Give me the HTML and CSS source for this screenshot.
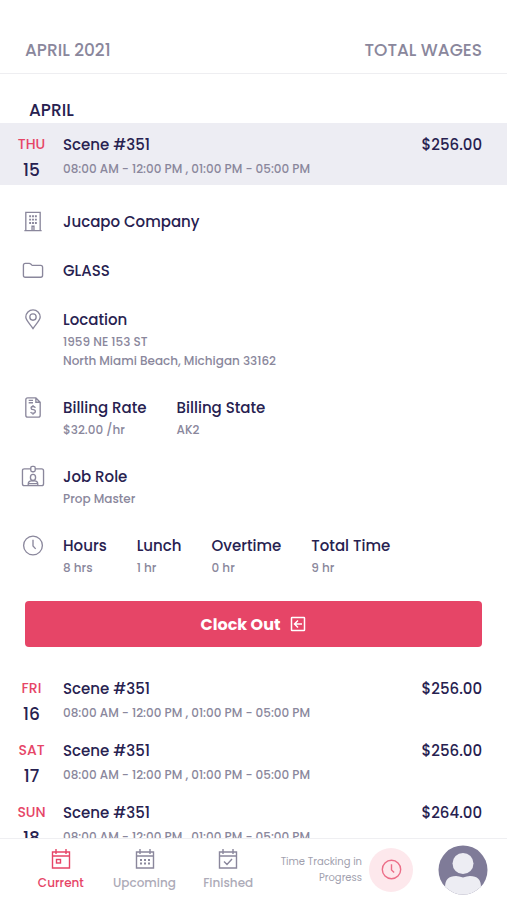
FILE: index.html
```html
<!DOCTYPE html>
<html lang="en">
<head>
<meta charset="utf-8">
<meta name="viewport" content="width=device-width, initial-scale=1">
<title>Total Wages</title>
<link rel="stylesheet" href="styles.css">
</head>
<body>
<header class="topbar"><span>APRIL 2021</span><span>TOTAL WAGES</span></header>
<main class="content">
  <h1 class="month">APRIL</h1>
  <article class="shift shift-active">
    <div class="date"><span class="weekday">THU</span><span class="day">15</span></div>
    <div class="info"><h2 class="title">Scene #351</h2><p class="times">08:00 AM - 12:00 PM , 01:00 PM - 05:00 PM</p></div>
    <span class="amount">$256.00</span>
  </article>
  <section class="details">
    <div class="detail">
      <svg class="icon" viewBox="0 0 24 24"><path d="M4.500 21V2.500h15V21M3 21.500h18M11 21v-4h2v4"/><path class="dots" d="M8 6.500h2M11 6.500h2M14 6.500h2M8 10h2M11 10h2M14 10h2M8 13.500h2M11 13.500h2M14 13.500h2"/></svg>
      <h3 class="title">Jucapo Company</h3>
    </div>
    <div class="detail">
      <svg class="icon" viewBox="0 0 24 24"><path d="M2 6.500q0-2 2-2h4q1 0 1.700.8l1 .9q.6.500 1.500.5H20q2 0 2 2V17q0 2-2 2H4q-2 0-2-2Z"/></svg>
      <h3 class="title">GLASS</h3>
    </div>
    <div class="detail">
      <svg class="icon" viewBox="0 0 24 24"><path d="M12 21.500C9.500 17.500 4.500 13 4.500 9.500a7.500 7.500 0 0 1 15 0c0 3.500-5 8-7.500 12Z"/><circle cx="12" cy="9.500" r="3.300"/></svg>
      <div><h3 class="title">Location</h3><p class="sub">1959 NE 153 ST<br>North Miami Beach, Michigan 33162</p></div>
    </div>
    <div class="detail">
      <svg class="icon" viewBox="0 0 24 24"><path d="M15 2H6.500Q4.500 2 4.500 4v16q0 2 2 2h11q2 0 2-2V6.500Zm0 0v4.500h4.500M7.500 4.500H12M7.500 7H12M14.500 12.200q-.6-1.200-2.400-1.200c-2.800 0-2.800 3 0 3.300 3.200.3 3 3.700 0 3.700q-1.900 0-2.600-1.300M12 9.500V11M12 18v1.500"/></svg>
      <div class="columns">
        <div><h3 class="title">Billing Rate</h3><p class="sub">$32.00 /hr</p></div>
        <div><h3 class="title">Billing State</h3><p class="sub">AK2</p></div>
      </div>
    </div>
    <div class="detail">
      <svg class="icon" viewBox="0 0 24 24"><path d="M9.500 4H3Q1 4 1 6v13.500q0 2 2 2h18q2 0 2-2V6q0-2-2-2h-6.500M9.700 3q0-1.500 1.500-1.500h1.600q1.500 0 1.500 1.500v2.500q0 1.500-1.500 1.500h-1.600q-1.500 0-1.500-1.500ZM7 21.500V20q0-3.500 3.500-3.500h3Q17 16.500 17 20v1.500M7 19.500h10"/><ellipse cx="12" cy="13" rx="2.700" ry="3.200"/></svg>
      <div><h3 class="title">Job Role</h3><p class="sub">Prop Master</p></div>
    </div>
    <div class="detail">
      <svg class="icon" viewBox="0 0 24 24"><circle cx="12" cy="12" r="9.800"/><path d="M12 6v6.500l2.800 3"/></svg>
      <div class="columns">
        <div><h3 class="title">Hours</h3><p class="sub">8 hrs</p></div>
        <div><h3 class="title">Lunch</h3><p class="sub">1 hr</p></div>
        <div><h3 class="title">Overtime</h3><p class="sub">0 hr</p></div>
        <div><h3 class="title">Total Time</h3><p class="sub">9 hr</p></div>
      </div>
    </div>
    <button class="clock-out" type="button">Clock Out
      <svg class="exit" viewBox="0 0 16 16"><rect x="1.500" y="1.500" width="13" height="13" rx=".6"/><path d="M12 8H5M8 4.500 4.500 8 8 11.500"/></svg>
    </button>
  </section>
  <article class="shift">
    <div class="date"><span class="weekday">FRI</span><span class="day">16</span></div>
    <div class="info"><h2 class="title">Scene #351</h2><p class="times">08:00 AM - 12:00 PM , 01:00 PM - 05:00 PM</p></div>
    <span class="amount">$256.00</span>
  </article>
  <article class="shift">
    <div class="date"><span class="weekday">SAT</span><span class="day">17</span></div>
    <div class="info"><h2 class="title">Scene #351</h2><p class="times">08:00 AM - 12:00 PM , 01:00 PM - 05:00 PM</p></div>
    <span class="amount">$256.00</span>
  </article>
  <article class="shift">
    <div class="date"><span class="weekday">SUN</span><span class="day">18</span></div>
    <div class="info"><h2 class="title">Scene #351</h2><p class="times">08:00 AM - 12:00 PM , 01:00 PM - 05:00 PM</p></div>
    <span class="amount">$264.00</span>
  </article>
</main>
<nav class="tabbar">
  <a class="tab tab-current" href="#current">
    <svg class="tab-icon" viewBox="0 0 22 22"><path d="M2.500 4h17v16h-17ZM2.500 8h17M6 1v5M16 1v5"/><rect x="6.500" y="11.500" width="4" height="3.500"/></svg>
    Current
  </a>
  <a class="tab" href="#upcoming">
    <svg class="tab-icon" viewBox="0 0 22 22"><path d="M2.500 4h17v16h-17ZM2.500 8h17M6 1v5M16 1v5"/><path class="dots" d="M6 12h2M10 12h2M14 12h2M6 15.500h2M10 15.500h2M14 15.500h2"/></svg>
    Upcoming
  </a>
  <a class="tab" href="#finished">
    <svg class="tab-icon" viewBox="0 0 22 22"><path d="M2.500 4h17v16h-17ZM2.500 8h17M6 1v5M16 1v5M7 13.500l3 3 5-5.500"/></svg>
    Finished
  </a>
  <p class="status">Time Tracking in Progress</p>
  <button class="tracker" type="button" aria-label="Time tracking">
    <svg class="tracker-icon" viewBox="0 0 24 24"><circle cx="12" cy="12" r="10.500"/><path d="M12 6v6.500l3 3"/></svg>
  </button>
  <button class="avatar" type="button" aria-label="Profile">
    <svg viewBox="0 0 50 50"><defs><clipPath id="disc"><circle cx="25" cy="25" r="24.500"/></clipPath></defs><g clip-path="url(#disc)"><path fill="#7f7b98" d="M0 0h50v50H0Z"/><circle cx="25" cy="18.500" r="10.500" fill="#ededf3"/><path fill="#ededf3" d="M7 50V42Q7 31 18 31q3 0 7 1.500Q29 31 32 31q11 0 11 11v8Z"/></g></svg>
  </button>
</nav>
</body>
</html>
```
FILE: styles.css
```css
* { box-sizing: border-box; }
body {
  margin: 0;
  height: 100vh;
  display: flex;
  flex-direction: column;
  background: #fff;
  color: #272150;
  font-family: Poppins, Inter, "Liberation Sans", sans-serif;
  font-weight: 500;
}
h1, h2, h3, p { margin: 0; font-weight: 500; }
button { padding: 0; border: 0; font: inherit; cursor: pointer; }
svg { display: block; fill: none; stroke: currentColor; }

.topbar {
  display: flex;
  justify-content: space-between;
  padding: 38px 25px 11px;
  border-bottom: 1px solid #eeeef1;
  color: #8a879c;
  font-size: 17px;
  line-height: 24px;
}
.content {
  flex: 1;
  min-height: 0;
  overflow-y: auto;
  scrollbar-width: none;
}
.month {
  padding: 24px 29px 1px;
  font-size: 17px;
  line-height: 24px;
}
.shift {
  display: flex;
  height: 62px;
  padding: 10px 25px 0 0;
}
.shift-active { background: #ededf3; }
.date {
  width: 63px;
  display: flex;
  flex-direction: column;
  align-items: center;
}
.weekday {
  color: #e64567;
  font-size: 14px;
  line-height: 23px;
}
.day {
  font-size: 17px;
  line-height: 28px;
}
.info { flex: 1; }
.title, .amount {
  font-size: 15px;
  line-height: 23px;
}
.times, .sub {
  color: #8a879c;
  font-size: 12px;
}
.times { line-height: 25px; }
.sub {
  margin-top: 1px;
  line-height: 19px;
}

.details {
  display: flex;
  flex-direction: column;
  gap: 26px;
  padding: 25px 25px 20px;
}
.detail {
  display: flex;
  align-items: flex-start;
  gap: 18px;
}
.icon {
  width: 24px;
  height: 23px;
  flex: none;
  margin-left: -4px;
  color: #8a879c;
  stroke-width: 1.4;
}
.dots { stroke-width: 2; }
.columns { display: flex; gap: 30px; }
.clock-out {
  display: flex;
  align-items: center;
  justify-content: center;
  gap: 10px;
  height: 46px;
  margin-top: -2px;
  border-radius: 4px;
  background: #e64567;
  color: #fff;
  font-size: 16px;
  font-weight: 700;
}
.exit { width: 16px; height: 16px; stroke-width: 1.5; }

.tabbar {
  display: flex;
  align-items: center;
  height: 62px;
  padding: 0 19px;
  border-top: 1px solid #efeff2;
  background: #fff;
}
.tab {
  flex: 1;
  display: flex;
  flex-direction: column;
  align-items: center;
  gap: 4px;
  color: #adabb8;
  font-size: 12px;
  line-height: 18px;
  text-decoration: none;
}
.tab-icon { width: 22px; height: 22px; color: #8a879c; stroke-width: 1.4; }
.tab-current, .tab-current .tab-icon { color: #e64567; }
.status {
  width: 92px;
  color: #a19fae;
  font-size: 10px;
  font-weight: 400;
  line-height: 16px;
  text-align: right;
}
.tracker {
  display: grid;
  place-items: center;
  width: 44px;
  height: 44px;
  margin: 0 25px 0 7px;
  border-radius: 50%;
  background: #fde8ec;
  color: #ec6e88;
}
.tracker-icon { width: 21px; height: 21px; stroke-width: 1.6; }
.avatar { width: 50px; height: 50px; border-radius: 50%; background: none; }
.avatar svg { stroke: none; }
```
